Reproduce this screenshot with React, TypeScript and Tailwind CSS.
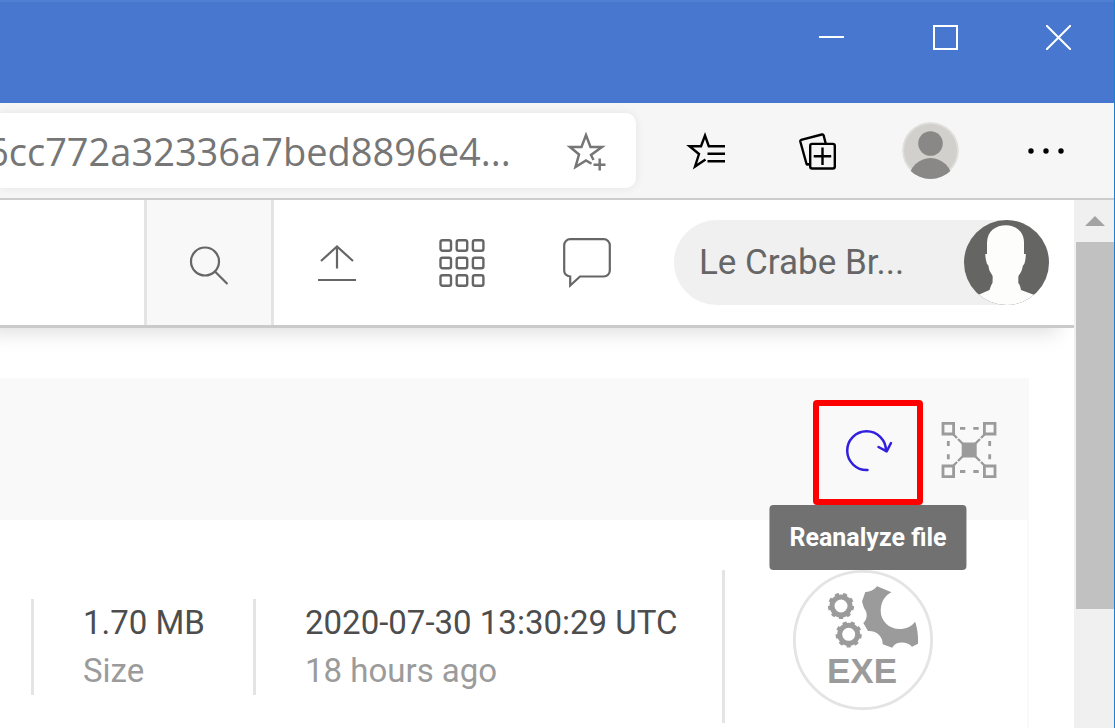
import React from 'react';

const WindowControls: React.FC = () => (
  <header className="flex h-[103px] items-start justify-end border-t-2 border-[#4f80d4] bg-[#4777cf] text-white">
    <button aria-label="Minimize" className="flex h-[71px] w-[114px] items-center justify-center">
      <svg className="h-[25px] w-[25px]" viewBox="0 0 25 25" stroke="currentColor" strokeWidth={2}><path d="M0 12h25" /></svg>
    </button>
    <button aria-label="Maximize" className="flex h-[71px] w-[114px] items-center justify-center">
      <svg className="h-[25px] w-[25px]" viewBox="0 0 25 25" fill="none" stroke="currentColor" strokeWidth={2}><path d="M1 1h23v23H1z" /></svg>
    </button>
    <button aria-label="Close" className="flex h-[71px] w-28 items-center justify-center">
      <svg className="h-[25px] w-[25px]" viewBox="0 0 25 25" stroke="currentColor" strokeWidth={2}><path d="M0 0l25 25M25 0L0 25" /></svg>
    </button>
  </header>
);

const BrowserToolbar: React.FC = () => (
  <div className="flex h-[97px] items-start border-b-2 border-[#cccccc] bg-[#f6f6f6] pt-[10px] pr-[10px]">
    <div className="mr-3 flex h-[75px] min-w-0 flex-1 items-center overflow-hidden rounded-r-[10px] bg-white shadow-[0_0_10px_rgba(0,0,0,0.08)]">
      <input
        type="text"
        aria-label="Address"
        readOnly
        defaultValue="6cc772a32336a7bed8896e4..."
        className="-ml-[13px] min-w-0 flex-1 bg-transparent font-['Open_Sans',sans-serif] text-[38px] leading-[52px] text-[#767676] outline-none"
      />
      <button aria-label="Add to favorites" className="mr-[30px] shrink-0 text-[#767676]">
        <svg className="h-10 w-10" viewBox="0 0 40 40" fill="none" stroke="currentColor" strokeWidth={2.5}>
          <path d="M27.5 29L25 24L36 16H24.5L20 4L15.5 16H4L13 23.5L9.5 36L20 29.5L25.5 32.8" />
          <path d="M33.7 27.5v12M27.5 33.7h12" />
        </svg>
      </button>
    </div>
    <button aria-label="Favorites" className="flex h-[75px] w-[113px] items-center justify-center text-black">
      <svg className="h-10 w-10" viewBox="0 0 40 40" fill="none" stroke="currentColor" strokeWidth={2.4}>
        <path d="M40 15.2H23.8L20 4.5L16 15.2H4.5L14 23L10 35.5L20.5 28.5" />
        <path d="M22.5 22.7H40M22.5 30.2H40" />
      </svg>
    </button>
    <button aria-label="Collections" className="flex h-[75px] w-[113px] items-center justify-center text-black">
      <svg className="h-10 w-10" viewBox="0 0 40 40" fill="none" stroke="currentColor" strokeWidth={2.4}>
        <rect x="12.2" y="12.9" width="24.6" height="24.6" rx="2" />
        <path d="M12 33l-2.2.5q-1 .2-1.4-1L2.3 10.5q-.3-1.2.9-1.6L23.8 3.5q1.4-.4 1.8.8L27.7 12.5" />
        <path d="M24.5 16.5v17.5M15.7 25.2h17.5" />
      </svg>
    </button>
    <button aria-label="Profile" className="flex h-[75px] w-[113px] items-center justify-center">
      <svg className="h-[57px] w-[57px]" viewBox="0 0 57 57">
        <clipPath id="profile-clip"><circle cx="28.5" cy="28.5" r="28.5" /></clipPath>
        <g clipPath="url(#profile-clip)">
          <circle cx="28.5" cy="28.5" r="28.5" fill="#dfdfdc" />
          <circle cx="28.5" cy="28.5" r="26.5" fill="#d1d0cd" />
          <circle cx="28.5" cy="21.5" r="12.3" fill="#898886" />
          <circle cx="28.5" cy="57.5" r="21.5" fill="#898886" />
        </g>
      </svg>
    </button>
    <button aria-label="Settings and more" className="flex h-[75px] w-[117px] items-center justify-center text-black">
      <svg className="h-[6px] w-9" viewBox="0 0 36 6" fill="currentColor">
        <circle cx="3" cy="3" r="2.7" /><circle cx="18" cy="3" r="2.7" /><circle cx="33" cy="3" r="2.7" />
      </svg>
    </button>
  </div>
);

const SiteHeader: React.FC = () => (
  <div className="flex h-[128px] border-b-[3px] border-[#cacaca] bg-white text-[#666666] shadow-[-16px_4px_20px_rgba(0,0,0,0.14)]">
    <input type="text" aria-label="Search" className="min-w-0 flex-1 bg-white px-4 text-[33px] outline-none" />
    <button aria-label="Run search" className="flex w-[130px] shrink-0 items-center justify-center border-x-[3px] border-[#e4e4e4] bg-[#f8f8f8]">
      <svg className="h-11 w-11" viewBox="0 0 44 44" fill="none" stroke="currentColor" strokeWidth={2.2}>
        <circle cx="18" cy="20.5" r="14" />
        <path d="M28 30.5L40.5 43" />
      </svg>
    </button>
    <button aria-label="Upload" className="flex w-[125px] shrink-0 items-center justify-center">
      <svg className="h-11 w-11" viewBox="0.5 0.5 44 44" fill="none" stroke="currentColor" strokeWidth={2.2}>
        <path d="M22.5 6V28M6.500 20.5L22.5 6L38.5 20.5M3.5 39.5H41.5" />
      </svg>
    </button>
    <button aria-label="Apps" className="flex w-[125px] shrink-0 items-center justify-center">
      <svg className="h-12 w-12" viewBox="0.5 0.5 48 48" fill="none" stroke="currentColor" strokeWidth={2.4}>
        {[1.7, 19.2, 36.7].map(y =>
          [3, 19.2, 35.4].map(x => <rect key={`${x}-${y}`} x={x} y={y} width="10.5" height="10.5" rx="2" />)
        )}
      </svg>
    </button>
    <button aria-label="Comments" className="flex w-[125px] shrink-0 items-center justify-center">
      <svg className="h-[52px] w-[52px]" viewBox="0.5 0.5 52 52" fill="none" stroke="currentColor" strokeWidth={2.2}>
        <path d="M19.5 40H43.3a6 6 0 0 0 6-6V8.7a6 6 0 0 0-6-6H9.7a6 6 0 0 0-6 6V34c0 3 2 5.5 6 6V49z" />
      </svg>
    </button>
    <button className="mx-[25px] my-5 flex w-[375px] shrink-0 items-center justify-between rounded-full bg-[#f0f0f0] pl-[25px]">
      <span className="text-[35px] leading-10">Le Crabe Br...</span>
      <svg className="h-[85px] w-[85px]" viewBox="0 0 85 85">
        <clipPath id="user-clip"><circle cx="42.5" cy="42.5" r="42.5" /></clipPath>
        <g clipPath="url(#user-clip)">
          <path fill="#656563" d="M0 0h85v85H0z" />
          <path
            fill="#fdfdfc"
            d="M42 5.3C51 5.3 60 11 60 22V34L61.8 34C61.8 38 61 43 60 44.5C58.5 45 58.5 48 58 49.5C57 53 54.3 55 54.3 57.5V63C56 65 56.500 67 57 70L70.5 75V85H14V75L25.5 70C26.5 67 27 65 28.5 63L28.7 57C28.5 54 26 53 25 49C24.5 46 24.5 45 23 44C22 41 21.3 37 21.3 34H23V23C23 11 32 5.3 42 5.3z"
          />
        </g>
      </svg>
    </button>
  </div>
);

const ExeIcon: React.FC = () => (
  <svg className="h-[140px] w-[140px]" viewBox="0 0 140 140" role="img" aria-label="EXE file">
    <circle cx="70" cy="70" r="68.6" fill="none" stroke="#e4e4e4" strokeWidth={2.8} />
    <g fill="none" stroke="#9b9b9b">
      <circle cx="48" cy="36" r="9" strokeWidth={5} />
      <circle cx="48" cy="36" r="11.8" strokeWidth={2.6} pathLength={18} strokeDasharray="1 1" />
      <circle cx="55.7" cy="64.3" r="9" strokeWidth={5} />
      <circle cx="55.7" cy="64.3" r="11.8" strokeWidth={2.6} pathLength={18} strokeDasharray="1 1" />
    </g>
    <path
      fill="#9b9b9b"
      d="M84 16.3L98.5 22.3C91 26 87.7 33 87.7 41C87.7 51 96 59 106.5 59C113 59 118.5 56.5 122 51.7C124 56 125.5 66 125 73.7L119 76.7C115 72 108 71.5 103.5 73.5C101 75 100 76.5 99.3 77.7L89.7 74.3C90 67 84 60.5 75 61L70.3 53C74.5 49 75 43 71 38L69 31.5L72.3 22C76.5 22.2 81 20 84 16.3z"
    />
    <text x="69" y="112.500" textAnchor="middle" fill="#9b9b9b" className="font-['Liberation_Sans',sans-serif] text-[35px] font-bold">EXE</text>
  </svg>
);

const FileCard: React.FC = () => (
  <section className="mt-[50px] mr-[45px] flex flex-1 flex-col border-r-2 border-[#f9f9f9]">
    <div className="flex h-[142px] items-start justify-end bg-[#f9f9f9] pt-[22px] pr-[30px]">
      <div className="relative">
        <button aria-describedby="reanalyze-tip" aria-label="Reanalyze file" className="flex h-[105px] w-[110px] items-center justify-center rounded-sm border-6 border-[#ff0000] text-[#311fdd]">
          <svg className="h-[52px] w-[52px]" viewBox="0 0 52 52" fill="none" stroke="currentColor" strokeWidth={2.5} strokeLinecap="round" strokeLinejoin="round">
            <path d="M25.5 43A19.4 19.4 0 1 1 44 24" />
            <path d="M36.5 20L44.7 24.3L49 16" />
          </svg>
        </button>
        <div id="reanalyze-tip" role="tooltip" className="absolute top-full left-1/2 z-10 -translate-x-1/2 rounded-sm bg-[#717171] px-5 py-4 text-[25px] leading-[33px] font-bold whitespace-nowrap text-white">
          Reanalyze file
        </div>
      </div>
      <button aria-label="Open in graph" className="mt-[21px] ml-[18px] text-[#9b9b9b]">
        <svg className="h-[58px] w-14" viewBox="0 0 56 58" fill="none" stroke="currentColor" strokeWidth={2.8}>
          <path d="M2 2.4h10.6v10.6H2zM43.4 2.4H54v10.6H43.4zM2 45h10.6v10.6H2zM43.4 45H54v10.6H43.4z" />
          <path d="M20.7 21.5h15v15h-15z" fill="currentColor" stroke="none" />
          <path d="M19 7.3h5.3M32.3 7.3h5.4M19 50.500h5.3M32.3 50.5h5.4M7.3 20v5M7.3 33.2v5M48.7 20v5M48.7 33.2v5" />
          <path strokeWidth={2.4} d="M12.500 13.5l3.5 3.5M17 18l5 5M43.5 13.5L40 17M39 18l-5 5M12.5 44.5L16 41M17 40l5-5M43.5 44.5L40 41M39 40l-5-5" />
        </svg>
      </button>
    </div>

    <div className="flex flex-1 items-start bg-white pt-[50px] pl-[31px] text-[33px] leading-12">
      <dl className="mt-[29px] flex w-[222px] flex-col-reverse border-l-[3px] border-[#e4e4e4] pl-[49px]">
        <dt className="text-[#9b9b9b]">Size</dt>
        <dd className="text-[#4d4d4d]">1.70 MB</dd>
      </dl>
      <div className="mt-[29px] flex-1 border-l-[3px] border-[#e4e4e4] pl-[49px] whitespace-nowrap">
        <p className="text-[#4d4d4d]">2020-07-30 13:30:29 UTC</p>
        <p className="text-[#9b9b9b]">18 hours ago</p>
      </div>
      <div className="h-[153px] shrink-0 border-l-[3px] border-[#e4e4e4] pr-[94px] pl-[68px]">
        <ExeIcon />
      </div>
    </div>
  </section>
);

const App: React.FC = () => {
  return (
    <div className="flex min-h-screen flex-col border-r border-[#1c7fd0] bg-white font-[Roboto,sans-serif]">
      <WindowControls />
      <BrowserToolbar />
      <div className="flex flex-1">
        <main className="flex min-w-0 flex-1 flex-col overflow-hidden">
          <SiteHeader />
          <FileCard />
        </main>
        <div className="w-10 shrink-0 bg-[#f0f0f0] pl-[2px]">
          <button aria-label="Scroll up" className="flex h-[42px] w-full items-center justify-center text-[#a3a3a3]">
            <svg className="h-[10px] w-5" viewBox="0 0 20 10" fill="currentColor"><path d="M10 0l10 10H0z" /></svg>
          </button>
          <div className="h-[367px] bg-[#c1c1c1]" />
        </div>
      </div>
    </div>
  );
};

export default App;
